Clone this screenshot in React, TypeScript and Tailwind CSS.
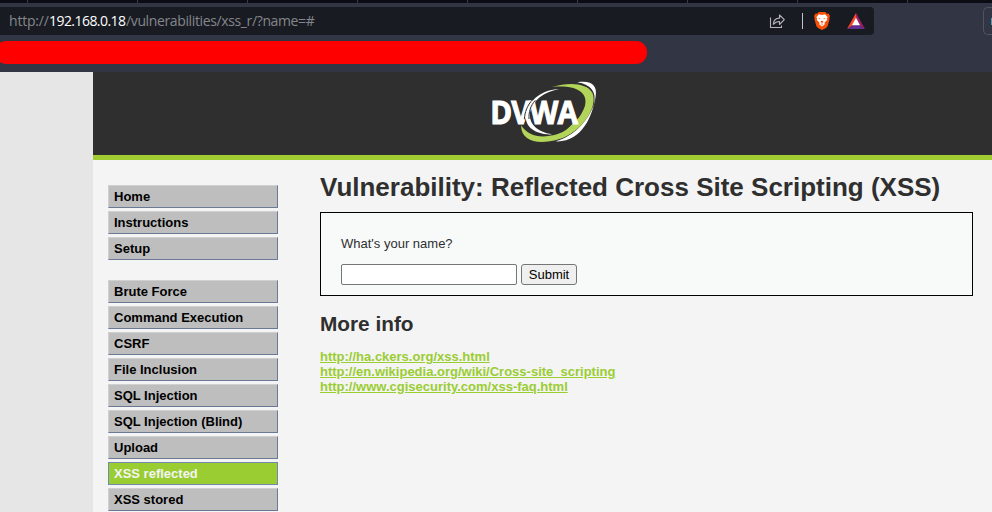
import React from "react";

const tabTicks = [0, 1, 2, 3, 4, 5, 6, 7, 8];
const mainLinks = ["Home", "Instructions", "Setup"];
const vulnLinks = [
  "Brute Force",
  "Command Execution",
  "CSRF",
  "File Inclusion",
  "SQL Injection",
  "SQL Injection (Blind)",
  "Upload",
  "XSS reflected",
  "XSS stored",
];

function MenuItem({ label }: { label: string }) {
  const active = label === "XSS reflected";
  return (
    <li
      className={
        active
          ? "h-[23px] border border-[#7288b0] bg-[#9acd32] pl-[5px] text-[13px] leading-[22px] font-bold text-[#f4f4f4]"
          : "h-[23px] border border-t-[#d0d0d0] border-l-[#d0d0d0] border-r-[#6b7a94] border-b-[#6b7a94] bg-[#bebebe] pl-[5px] text-[13px] leading-[22px] font-bold text-black"
      }
    >
      {label}
    </li>
  );
}

function ShareIcon() {
  return (
    <svg width="16" height="15" viewBox="0 0 16 15" fill="none" stroke="#b4b5b9" strokeWidth="1.1">
      <path d="M1.500 3.500v10h11v-2" />
      <path d="M10.500 1v3.100C6.500 4.100 4.500 6.500 4.300 10.300 6 8.300 7.800 7.500 10.500 7.500v3L15.300 5.700z" strokeLinejoin="round" />
    </svg>
  );
}

function LionIcon() {
  return (
    <svg width="16" height="18" viewBox="0 0 16 18">
      <path d="M4.700 0h6.600l1.500 1.700 1.700-.1 1.500 2.500-.7 2 .3 1-2 7.100-1.600 1.800L8 18l-4-2-1.600-1.800L.4 7.100l.3-1-.7-2 1.500-2.500 1.700.1z" fill="#fb4f09" />
      <path d="M5 2.300 8 2.900l3-.6 2.700 2.900-.8 1.100.2 1.800-2.600 2.700.3 1.400L8 14.500l-2.800-2.300.3-1.400-2.600-2.700.2-1.800-.8-1.100z" fill="white" />
      <path d="m4.200 5.700 2.300.9-.4 1zm7.600 0-2.300.9.4 1zM7.500 8.600 8 9.300l.5-.7 1 1.300-1.500 1-1.500-1zM6.700 12.100 8 11.500l1.300.6-1.300.7z" fill="#fb4f09" />
    </svg>
  );
}

function TriangleIcon() {
  return (
    <svg width="18" height="16" viewBox="0 0 18 16">
      <path d="M9 0 0 16l9-6z" fill="#ff4724" />
      <path d="M9 0v10l9 6z" fill="#9e1f63" />
      <path d="M0 16h18l-9-6z" fill="#662d91" />
      <path d="m9 4.700 4 7.500H5z" fill="white" />
    </svg>
  );
}

function Logo() {
  return (
    <svg width="130" height="75" viewBox="0 0 390 225">
      <path d="M292 22C337 15 352 34 347 64 338 124 304 204 226 199 289 182 329 128 342 87 350 51 334 29 292 22z" fill="white" />
      <path d="M216 36C270 20 320 25 337 53 356 95 304 173 236 193 180 209 124 204 123 151 147 186 184 191 231 178 274 164 305 124 315 92 325 53 289 29 216 36z" fill="#b2d45a" />
      <path d="m243 180 69-66-42 60z" fill="#b2d45a" />
      <path
        d="M237 42C188 44 150 72 140 112 128 151 162 181 218 178 167 171 146 143 150 111 158 77 191 51 237 42z"
        fill="white"
      />
      <text
        x="31"
        y="146"
        textLength="260"
        lengthAdjust="spacingAndGlyphs"
        fill="white"
        stroke="white"
        strokeWidth="3"
        className="font-['Open_Sans',sans-serif] text-[98px] font-bold tracking-[-3px]"
      >
        DVWA
      </text>
      <path d="M158 74C142 90 134 112 133 133" fill="none" stroke="#2f2f2f" strokeWidth="3" />
      <path d="M166 76C151 92 146 112 147 132" fill="none" stroke="#2f2f2f" strokeWidth="3" />
    </svg>
  );
}

export default function App() {
  return (
    <div className="flex h-[512px] w-[992px] flex-col overflow-hidden bg-[#f4f4f4] font-['Liberation_Sans',Arial,sans-serif]">
      <div className="h-[72px] shrink-0 bg-[#323543]">
        <div className="flex h-[3px] gap-[109px] bg-[#0c0c14] pl-[27px]">
          {tabTicks.map((n) => (
            <span key={n} className="h-[3px] w-px shrink-0 bg-[#3b3b43]" />
          ))}
        </div>
        <div className="mt-1 flex h-7 justify-between">
          <div className="flex h-7 w-[874px] items-center rounded-r-[4px] bg-[#181b22] pl-[9px]">
            <div className="flex w-[760px] font-['Open_Sans','Noto_Sans',sans-serif] text-[14px] leading-7 whitespace-nowrap text-[#85878c]">
              <span className="w-[40px] tracking-[-0.2px]">http://</span>
              <span className="w-[77px] tracking-[-0.55px] text-white">192.168.0.18</span>
              <span className="tracking-[-0.37px]">/vulnerabilities/xss_r/?name=#</span>
            </div>
            <ShareIcon />
            <span className="ml-[17px] h-4 w-px bg-[#c4c4c7]" />
            <span className="ml-[11px]"><LionIcon /></span>
            <span className="ml-[17px]"><TriangleIcon /></span>
          </div>
          <div className="flex w-[9px] items-center justify-end overflow-hidden rounded-l-[5px] border border-r-0 border-[#505361]">
            <span className="h-[7px] w-px bg-[#559bb5]" />
          </div>
        </div>
        <div className="mt-[6px] -ml-[5px] h-[23px] w-[652px] rounded-[11px] bg-[#ff0000]" />
      </div>
      <div className="flex min-h-0 flex-1">
        <div className="w-[93px] shrink-0 bg-[#e6e6e6]" />
        <div className="flex min-w-0 flex-1 flex-col">
          <header className="h-[88px] shrink-0 border-b-[5px] border-[#a1cc33] bg-[#2f2f2f] pt-[3px] pl-[387px]">
            <Logo />
          </header>
          <div className="flex min-h-0 flex-1 pl-[15px]">
            <nav className="w-[170px] shrink-0 pt-[25px]">
              <ul className="flex flex-col gap-[3px]">
                {mainLinks.map((l) => <MenuItem key={l} label={l} />)}
              </ul>
              <ul className="mt-5 flex flex-col gap-[3px]">
                {vulnLinks.map((l) => <MenuItem key={l} label={l} />)}
              </ul>
            </nav>
            <main className="ml-[42px] w-[653px] text-[#2f2f2f]">
              <h1 className="mt-[11px] h-[41px] text-[26px] leading-[32px] font-bold whitespace-nowrap">
                Vulnerability: Reflected Cross Site Scripting (XSS)
              </h1>
              <div className="h-[84px] border border-black bg-[#f8fafa] pt-[23px] pl-5 text-[13px]">
                <p className="leading-4">What's your name?</p>
                <div className="mt-3 flex gap-1">
                  <input className="h-[21px] w-[176px] rounded-[2px] border border-[#767676] bg-white" />
                  <button className="h-[21px] w-[56px] rounded-[3px] border border-[#767676] bg-[#efefef] text-[13px] leading-[19px] text-black">
                    Submit
                  </button>
                </div>
              </div>
              <h2 className="mt-[15px] text-[20.8px] leading-[26px] font-bold">More info</h2>
              <ul className="mt-[12px] text-[13px] leading-[15px] font-bold text-[#9acd32] underline">
                <li>http://ha.ckers.org/xss.html</li>
                <li>http://en.wikipedia.org/wiki/Cross-site_scripting</li>
                <li>http://www.cgisecurity.com/xss-faq.html</li>
              </ul>
            </main>
          </div>
        </div>
      </div>
    </div>
  );
}
